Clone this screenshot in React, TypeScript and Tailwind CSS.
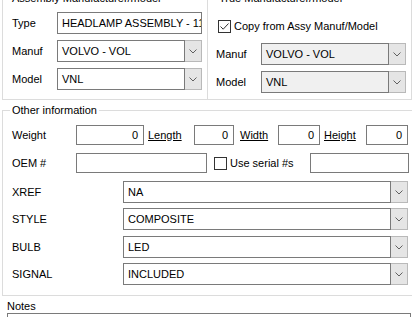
import type { ReactNode } from "react";

const Chevron = () => (
  <svg width="8" height="5" viewBox="0 0 8 5" fill="none">
    <path d="M0.5 0.5 L4 4 L7.5 0.5" stroke="#606060" strokeWidth="1" />
  </svg>
);

const Combo = ({
  value,
  className,
  gray,
}: {
  value: string;
  className: string;
  gray?: boolean;
}) => (
  <div className={`flex h-[22px] ${className}`}>
    <div
      className={`flex-1 flex items-center pl-[4px] border border-[#7a7a7a] whitespace-nowrap overflow-hidden ${
        gray ? "bg-[#f0f0f0]" : "bg-white"
      }`}
    >
      {value}
    </div>
    <div className="w-[17px] flex items-center justify-center border border-l-0 border-[#b9b9b9] bg-[#e5e5e5]">
      <Chevron />
    </div>
  </div>
);

const TextBox = ({
  value = "",
  className,
  right,
}: {
  value?: string;
  className: string;
  right?: boolean;
}) => (
  <div
    className={`flex items-center border border-[#7a7a7a] bg-white whitespace-nowrap overflow-hidden ${
      right ? "justify-end pr-[5px]" : "pl-[4px]"
    } ${className}`}
  >
    {value}
  </div>
);

const Check = ({ checked }: { checked?: boolean }) => (
  <div className="w-[13px] h-[13px] shrink-0 border border-[#333] bg-white flex items-center justify-center">
    {checked && (
      <svg width="11" height="11" viewBox="0 0 11 11" fill="none">
        <path d="M1.5 5.5 L4.2 8.2 L9.5 2.5" stroke="#333" strokeWidth="1" />
      </svg>
    )}
  </div>
);

const Row = ({ label, labelW, children, className = "" }: { label: string; labelW: string; children: ReactNode; className?: string }) => (
  <div className={`flex items-center ${className}`}>
    <div className={`pl-[9px] ${labelW}`}>{label}</div>
    {children}
  </div>
);

export default function App() {
  return (
    <div className="w-[412px] h-[317px] overflow-hidden bg-white text-[11px] leading-[15px] text-black font-['Liberation_Sans',Arial,sans-serif]">
      <div className="flex -mt-[9px] h-[109px]">
        <fieldset className="ml-[2px] w-[208px] h-[109px] border border-[#dcdcdc]">
          <legend className="ml-[7px] px-[2px]">Assembly Manufacturer/model</legend>
          <div className="pt-[6px]">
            <Row label="Type" labelW="w-[54px]">
              <TextBox value="HEADLAMP ASSEMBLY - 11408" className="w-[145px] h-[22px]" />
            </Row>
            <Row label="Manuf" labelW="w-[54px]" className="mt-[6px]">
              <Combo value="VOLVO - VOL" className="w-[145px]" />
            </Row>
            <Row label="Model" labelW="w-[54px]" className="mt-[6px]">
              <Combo value="VNL" className="w-[145px]" />
            </Row>
          </div>
        </fieldset>
        <fieldset className="w-[206px] h-[109px] border border-l-0 border-[#dcdcdc]">
          <legend className="ml-[9px] px-[2px]">True Manufacturer/model</legend>
          <div className="pt-[13px] pl-[10px] flex items-center gap-[3px]">
            <Check checked />
            <span>Copy from Assy Manuf/Model</span>
          </div>
          <div className="flex items-center mt-[9px]">
            <div className="pl-[8px] w-[53px]">Manuf</div>
            <Combo value="VOLVO - VOL" className="w-[145px]" gray />
          </div>
          <div className="flex items-center mt-[6px]">
            <div className="pl-[8px] w-[53px]">Model</div>
            <Combo value="VNL" className="w-[145px]" gray />
          </div>
        </fieldset>
      </div>

      <fieldset className="mt-[3px] ml-[2px] w-[412px] h-[193px] border border-[#dcdcdc]">
        <legend className="ml-[7px] px-[2px]">Other information</legend>
        <div className="pt-[7px]">
          <div className="flex items-center h-[20px]">
            <div className="pl-[9px] w-[73px]">Weight</div>
            <TextBox value="0" right className="w-[68px] h-[20px]" />
            <div className="ml-[4px] w-[46px] underline">Length</div>
            <TextBox value="0" right className="w-[40px] h-[20px]" />
            <div className="ml-[6px] w-[38px] underline">Width</div>
            <TextBox value="0" right className="w-[42px] h-[20px]" />
            <div className="ml-[4px] w-[42px] underline">Height</div>
            <TextBox value="0" right className="w-[42px] h-[20px]" />
          </div>
          <div className="flex items-center h-[20px] mt-[8px]">
            <div className="pl-[9px] w-[73px]">OEM #</div>
            <TextBox className="w-[131px] h-[20px]" />
            <div className="ml-[7px] w-[96px] flex items-center gap-[3px]">
              <Check />
              <span>Use serial #s</span>
            </div>
            <TextBox className="w-[99px] h-[20px]" />
          </div>
          <Row label="XREF" labelW="w-[120px]" className="mt-[8px]">
            <Combo value="NA" className="w-[285px]" />
          </Row>
          <Row label="STYLE" labelW="w-[120px]" className="mt-[5px]">
            <Combo value="COMPOSITE" className="w-[285px]" />
          </Row>
          <Row label="BULB" labelW="w-[120px]" className="mt-[6px]">
            <Combo value="LED" className="w-[285px]" />
          </Row>
          <Row label="SIGNAL" labelW="w-[120px]" className="mt-[5px]">
            <Combo value="INCLUDED" className="w-[285px]" />
          </Row>
        </div>
      </fieldset>

      <div className="mt-[4px] ml-[7px] leading-[13px]">Notes</div>
      <div className="ml-[7px] w-[404px] h-[20px] border border-[#7a7a7a] bg-white" />
    </div>
  );
}
